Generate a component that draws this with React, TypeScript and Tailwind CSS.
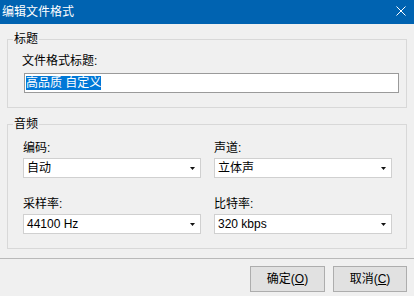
const Select = ({ value }: { value: string }) => {
    return (
        <div className="mt-[3px] flex h-[20px] items-center justify-between border border-[#d0d0d0] bg-white pl-[3px] pr-[5px]">
            <span className="leading-[14px]">{value}</span>
            <svg width="5" height="3" viewBox="0 0 5 3">
                <polygon points="0,0 5,0 2.5,3" fill="#111" />
            </svg>
        </div>
    )
}

const Field = ({ label, value }: { label: string; value: string }) => {
    return (
        <div className="flex flex-col">
            <span className="leading-[14px] pl-[0px]">{label}</span>
            <Select value={value} />
        </div>
    )
}

const App = () => {
    return (
        <div className="flex h-[296px] w-[414px] flex-col overflow-hidden bg-[#f0f0f0] text-[12px] text-black font-['Liberation_Sans','Noto_Sans_CJK_SC',sans-serif]">

            {/* title bar */}
            <div className="flex h-[24px] shrink-0 items-center justify-between bg-[#0063b1] pl-[2px] pr-[8px] text-white">
                <span className="leading-[24px]">编辑文件格式</span>
                <svg width="10" height="10" viewBox="0 0 10 10" className="mb-[2px]">
                    <path d="M0.5 0.5 L9.5 9.5 M9.5 0.5 L0.5 9.5" stroke="#fff" strokeWidth="1" />
                </svg>
            </div>

            {/* 标题 */}
            <fieldset className="mx-[7px] mt-[8px] border border-[#d8d8d8]">
                <legend className="ml-[5px] px-[1px] leading-[14px]">标题</legend>
                <div className="flex flex-col pl-[14px] pt-[8px] pb-[14px]">
                    <span className="leading-[14px]">文件格式标题:</span>
                    <div className="ml-[2px] mt-[5px] flex h-[20px] w-[375px] items-center border border-[#9a9a9a] bg-white pl-[1px]">
                        <span className="bg-[#0078d7] leading-[14px] text-white">高品质 自定义</span>
                    </div>
                </div>
            </fieldset>

            {/* 音频 */}
            <fieldset className="mx-[7px] mt-[9px] border border-[#d8d8d8]">
                <legend className="ml-[5px] px-[1px] leading-[14px]">音频</legend>
                <div className="grid grid-cols-[178px_178px] gap-x-[13px] gap-y-[19px] pl-[15px] pt-[10px] pb-[14px]">
                    <Field label="编码:" value="自动" />
                    <Field label="声道:" value="立体声" />
                    <Field label="采样率:" value="44100 Hz" />
                    <Field label="比特率:" value="320 kbps" />
                </div>
            </fieldset>

            <div className="mt-[9px] h-px shrink-0 bg-[#b9b9b9]" />

            {/* buttons */}
            <div className="mt-[7px] flex justify-end gap-[8px] pr-[7px]">
                <button className="h-[26px] w-[75px] border border-[#adadad] bg-[#e1e1e1] leading-[14px]">
                    确定(<span className="underline">O</span>)
                </button>
                <button className="h-[26px] w-[74px] border border-[#adadad] bg-[#e1e1e1] leading-[14px]">
                    取消(<span className="underline">C</span>)
                </button>
            </div>
        </div>
    )
}

export default App
